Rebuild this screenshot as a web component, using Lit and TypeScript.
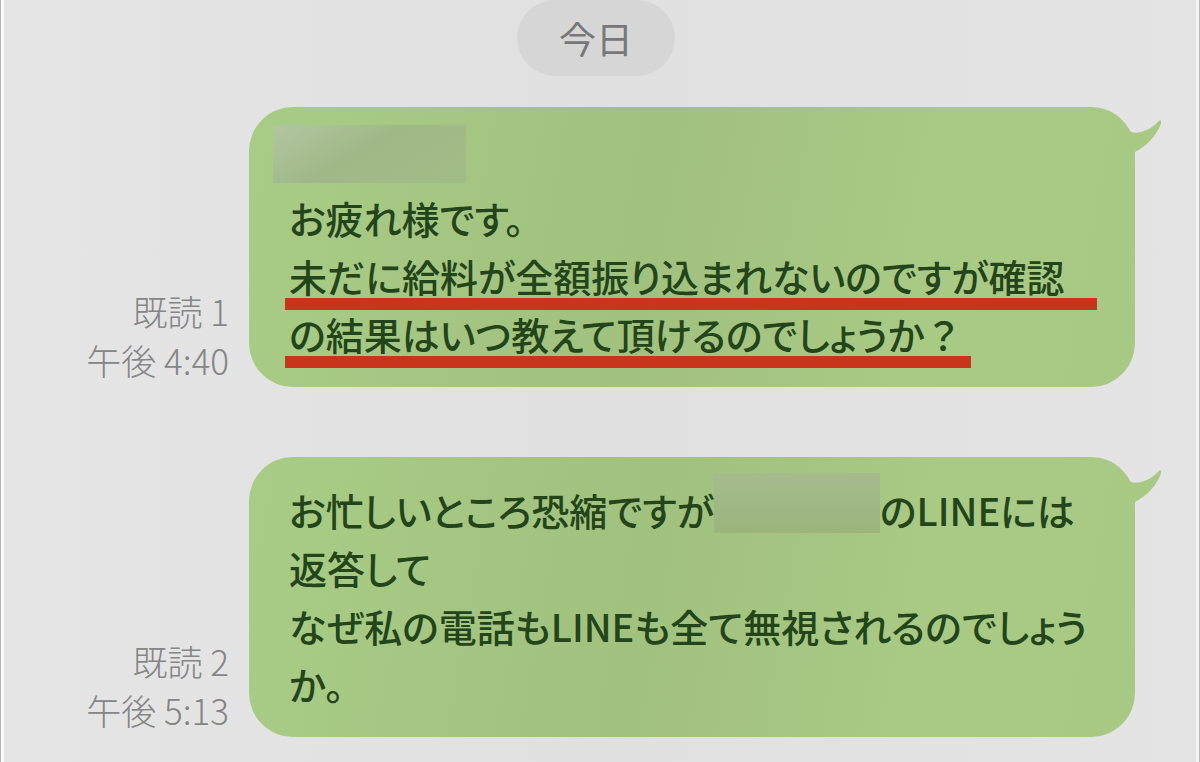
import { LitElement, html, css, svg } from "lit";
import { customElement, property } from "lit/decorators.js";

const tail = svg`<path d="M0 0 L8 8 C12 13 17 15 24 13 C32 11 38 6 43 1 C45 2 44 6 41 11 C36 20 29 27 18 33 L18 44 L0 44 Z" />`;

@customElement("chat-message")
class ChatMessage extends LitElement {
  @property() read = "";
  @property() time = "";

  static styles = css`
    :host {
      display: flex;
      align-items: flex-end;
      gap: 20px;
    }
    .meta {
      flex: none;
      width: 228px;
      box-sizing: border-box;
      padding-bottom: 3px;
      color: #858585;
      font-size: 35px;
      font-weight: 300;
      line-height: 49px;
      text-align: right;
    }
    .meta span,
    .meta time {
      display: block;
      white-space: nowrap;
    }
    .bubble {
      position: relative;
      flex: 1;
      min-width: 0;
      padding: 24px 40px;
      border-radius: 44px;
      background: linear-gradient(100deg, #a8cc86 0%, #a1c17e 45%, #a8ca84 75%, #a7c983 100%);
      color: #24441a;
      font-size: 38px;
      font-weight: 500;
      line-height: 58px;
      font-feature-settings: "palt";
    }
    .tail {
      position: absolute;
      top: 12px;
      right: -27px;
      width: 45px;
      height: 44px;
      fill: #a7c983;
    }
  `;

  render() {
    return html`
      <div class="meta"><span>${this.read}</span><time>${this.time}</time></div>
      <div class="bubble">
        <svg class="tail" viewBox="0 0 45 44" aria-hidden="true">${tail}</svg>
        <slot></slot>
      </div>
    `;
  }
}

@customElement("app-root")
class AppRoot extends LitElement {
  static styles = css`
    :host {
      display: block;
      min-height: 100vh;
      box-sizing: border-box;
      overflow: hidden;
      border-left: 1px solid #b4b4b4;
      border-right: 1px solid #b8b8b8;
      box-shadow: inset 3px 0 0 #f8f8f8, inset -3px 0 0 #f4f4f4;
      background: linear-gradient(90deg, #e5e5e5, #e0e0e0 50%, #e4e4e4);
      font-family: "Noto Sans CJK JP", sans-serif;
    }
    .day {
      display: flex;
      justify-content: center;
    }
    .day time {
      padding: 0 42px;
      border-radius: 38px;
      background: #d6d6d6;
      color: #777;
      font-size: 37px;
      line-height: 76px;
      margin-right: 8px;
    }
    .log {
      display: flex;
      flex-direction: column;
      gap: 70px;
      padding: 31px 64px 24px 0;
    }
    .line {
      display: block;
      min-height: 58px;
    }
    .mark {
      position: relative;
      display: inline-block;
    }
    .mark.full {
      display: block;
    }
    .mark::after {
      content: "";
      position: absolute;
      left: -4px;
      right: -8px;
      bottom: -5px;
      height: 12px;
      background: #c8341c;
    }
    .mark.full::after {
      right: -2px;
    }
    .wide {
      font-feature-settings: normal;
    }
    .mask {
      display: inline-block;
      vertical-align: top;
      width: 166px;
      height: 60px;
      margin-top: -8px;
      background: linear-gradient(#a5bb8f, #9ab47c);
    }
    .mask.name {
      width: 193px;
      height: 58px;
      margin: -6px 0 0 -16px;
      background: linear-gradient(150deg, #b2c6a0, #a0b888 45%, #a2bc86);
    }
  `;

  render() {
    return html`
      <div class="day"><time>今日</time></div>
      <main class="log">
        <chat-message read="既読 1" time="午後 4:40">
          <span class="line"><span class="mask name"></span></span>
          <span class="line">お疲れ様です。</span>
          <span class="line"><span class="mark full">未だに給料が全額振り込まれないのですが確認</span></span>
          <span class="line"><span class="mark">の結果はいつ教えて頂けるのでしょうか<span class="wide">？</span></span></span>
        </chat-message>
        <chat-message read="既読 2" time="午後 5:13">
          <span class="line">お忙しいところ恐縮ですが<span class="mask"></span>のLINEには</span>
          <span class="line">返答して</span>
          <span class="line">なぜ私の電話もLINEも全て無視されるのでしょう</span>
          <span class="line">か。</span>
        </chat-message>
      </main>
    `;
  }
}
